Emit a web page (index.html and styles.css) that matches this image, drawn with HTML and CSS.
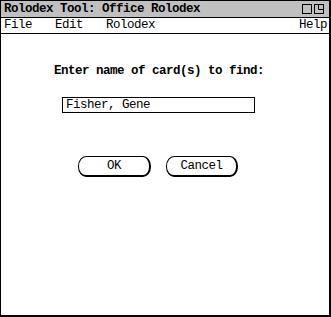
FILE: index.html
```html
<!DOCTYPE html>
<html>
<head>
<meta charset="utf-8">
<link rel="stylesheet" href="styles.css">
</head>
<body>
<div class="window">
  <div class="titlebar">
    <span class="title">Rolodex Tool: Office Rolodex</span>
    <span class="winicons">
      <svg width="10" height="10" viewBox="0 0 10 10"><rect x="0.5" y="0.5" width="9" height="9" fill="none" stroke="#000"/></svg>
      <svg width="10" height="10" viewBox="0 0 10 10"><rect x="0.5" y="0.5" width="9" height="9" fill="none" stroke="#000"/><path d="M4.5 0.5V5.5H9.5" fill="none" stroke="#000"/></svg>
    </span>
  </div>
  <div class="menubar">
    <span class="menu m-file">File</span>
    <span class="menu m-edit">Edit</span>
    <span class="menu m-rolo">Rolodex</span>
    <span class="menu m-help">Help</span>
  </div>
  <div class="content">
    <div class="prompt">Enter name of card(s) to find:</div>
    <div class="field">Fisher, Gene</div>
    <div class="buttons">
      <div class="btn btn-ok">OK</div>
      <div class="btn btn-cancel">Cancel</div>
    </div>
  </div>
</div>
</body>
</html>
```
FILE: styles.css
```css
html, body {
  margin: 0;
  padding: 0;
  background: #fff;
}
body {
  font-family: "Liberation Mono", "DejaVu Sans Mono", monospace;
  font-size: 12.5px;
  letter-spacing: -0.5px;
  color: #000;
}
.window {
  width: 328px;
  height: 314px;
  border: 1px solid #000;
  border-right-width: 2px;
  border-bottom-width: 2px;
  display: flex;
  flex-direction: column;
}
.titlebar {
  height: 16px;
  background: #c0c0c0;
  border-bottom: 1px solid #000;
  display: flex;
  align-items: center;
  justify-content: space-between;
  padding: 0 5px 0 3px;
}
.title {
  font-weight: bold;
  line-height: 16px;
}
.winicons {
  display: flex;
  gap: 2px;
}
.winicons svg {
  display: block;
}
.menubar {
  height: 15px;
  border-bottom: 1px solid #000;
  display: flex;
  align-items: center;
  padding-left: 3px;
}
.menu {
  line-height: 15px;
}
.m-edit { margin-left: 23px; }
.m-rolo { margin-left: 23px; }
.m-help { margin-left: auto; margin-right: 2px; }
.content {
  flex: 1;
  padding-top: 30px;
}
.prompt {
  font-weight: bold;
  line-height: 14px;
  margin-left: 53px;
}
.field {
  margin-top: 19px;
  margin-left: 61px;
  width: 188px;
  height: 14px;
  border: 1px solid #000;
  line-height: 15px;
  padding-left: 3px;
}
.buttons {
  display: flex;
  gap: 15px;
  margin-top: 43px;
  margin-left: 77px;
}
.btn {
  height: 18px;
  line-height: 18px;
  text-align: center;
  border: 1px solid #000;
  border-right-width: 2px;
  border-bottom-width: 2px;
  border-radius: 8px / 10px;
}
.btn-ok { width: 70px; }
.btn-cancel { width: 69px; }
```
